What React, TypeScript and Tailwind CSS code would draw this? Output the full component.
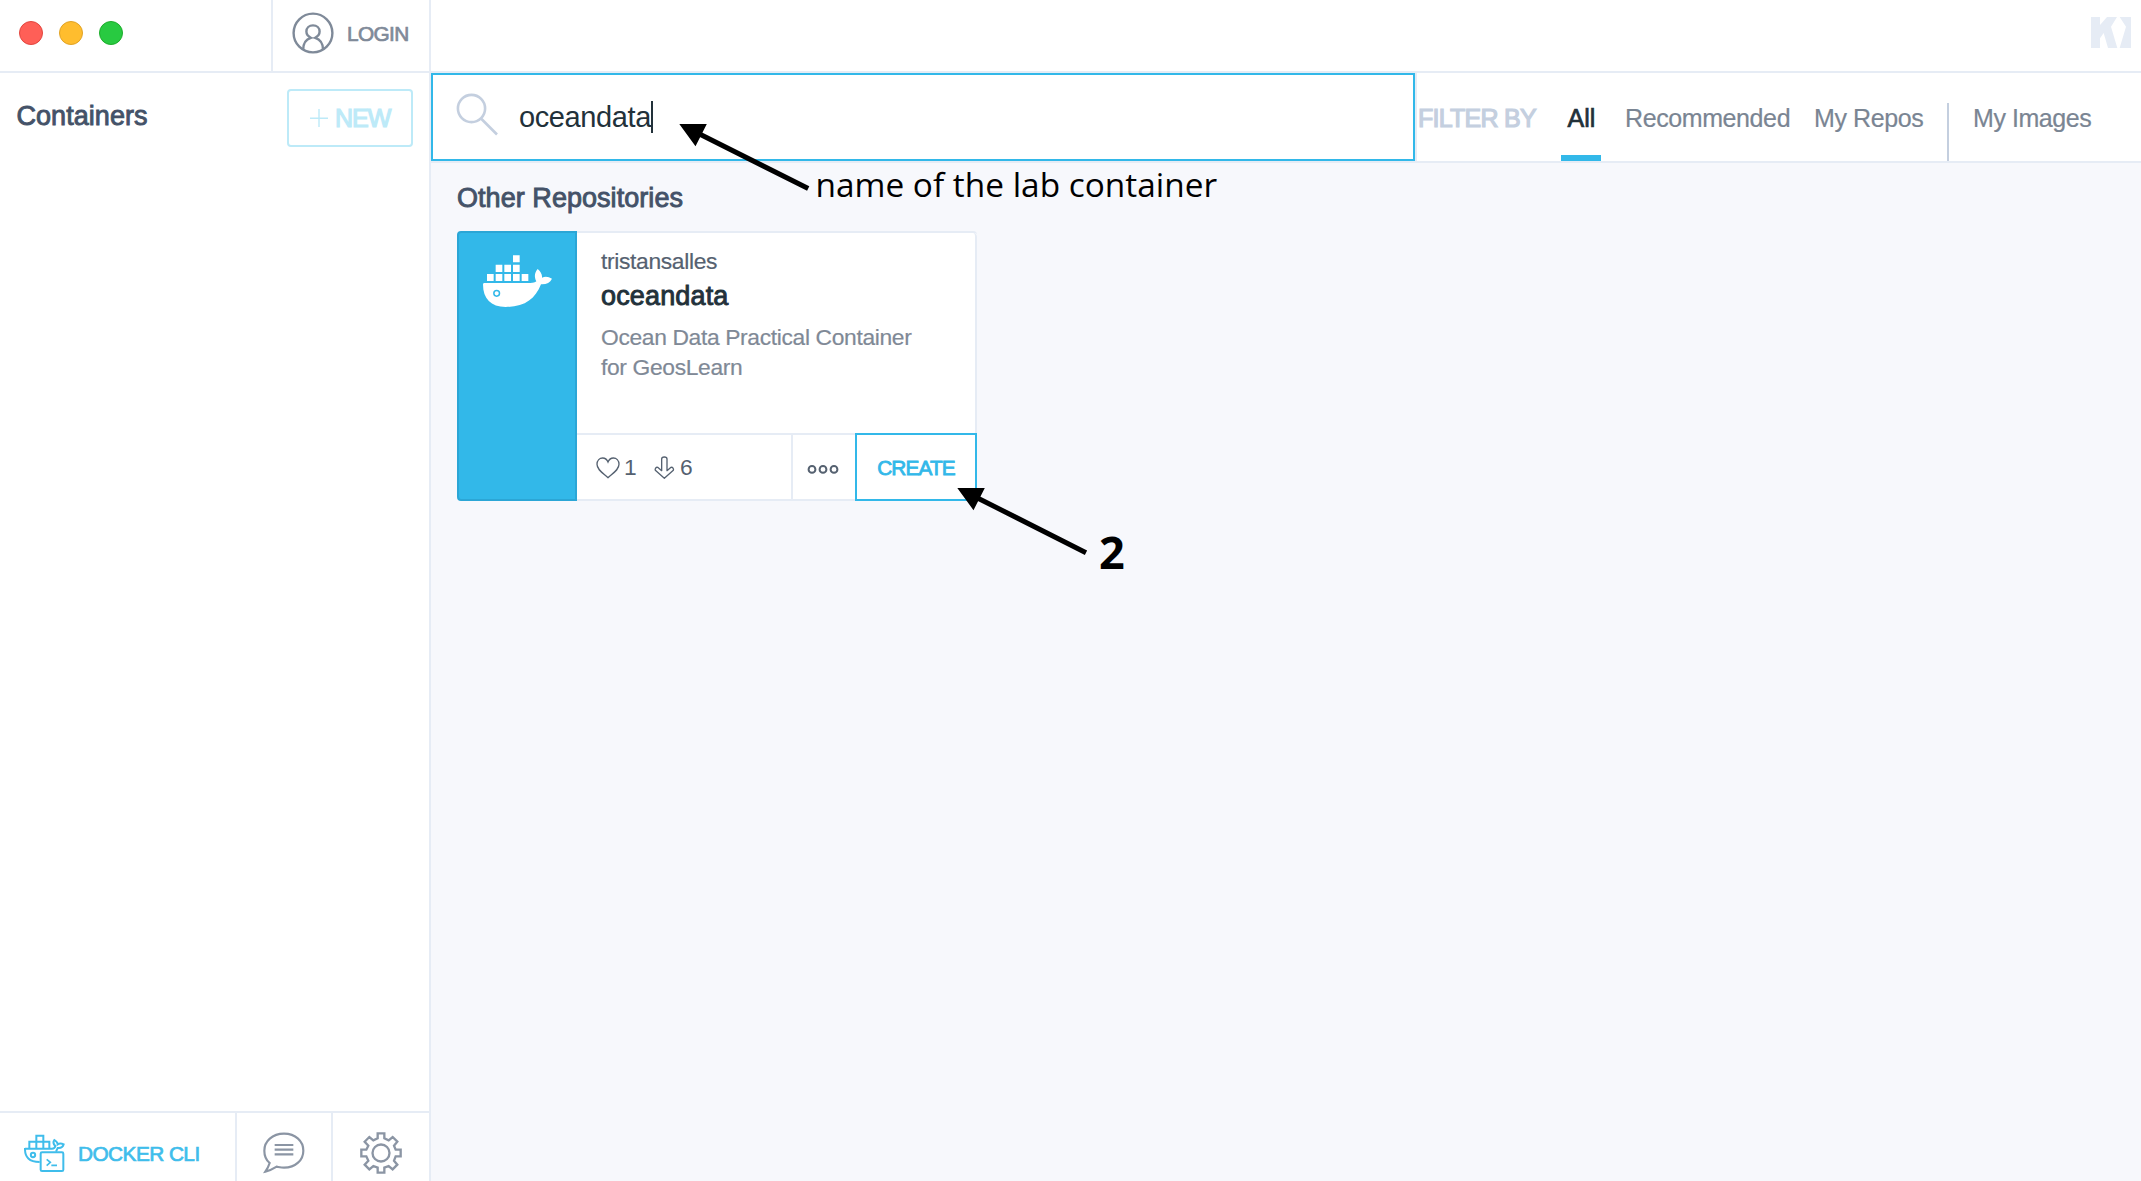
import React from "react";

const LINE = "border-[#e6ecf5]";

function UserIcon() {
  return (
    <svg width="42" height="42" viewBox="0 0 42 42" fill="none" stroke="#7f8a99" strokeWidth="2.4">
      <circle cx="21" cy="21" r="19.4" />
      <path d="M11.2 37.5 C11.2 31.5 13 27.6 18.8 25.8 C15.6 24.2 14.4 22 14.4 19.6 C14.4 16 17.2 13.4 21 13.4 C24.8 13.4 27.6 16 27.6 19.6 C27.6 22 26.4 24.2 23.2 25.8 C29 27.6 31 31.5 31 37.5" />
    </svg>
  );
}

function KitematicLogo() {
  return (
    <svg width="40" height="31" viewBox="0 0 120 93" fill="#e6ecf5">
      <path d="M0 0 H27 V24 L48 0 H78 L60 29 L79 93 H51 L38 48 L27 64 V93 H0 Z" />
      <path d="M86 0 H120 V93 H86 L105 29 Z" />
    </svg>
  );
}

function Whale() {
  return (
    <svg width="69" height="52" viewBox="0 0 207 156" fill="#fff">
      <path d="M90 1h20v21H90zM38 29h20v22H38zM64 29h20v22H64zM90 29h20v22H90zM12 57h20v21H12zM38 57h20v21H38zM64 57h20v21H64zM90 57h20v21H90zM116 57h20v21H116z" />
      <path d="M2 84 H142 C151 84 156 82 160 79 C152 64 156 51 164 42 C173 50 178 58 177 68 C187 63 197 65 207 71 C201 83 190 89 174 88 C157 132 125 156 68 156 C24 156 0 132 0 88 Z" />
      <circle cx="41" cy="115" r="8.5" fill="#fff" stroke="#32b8e9" strokeWidth="4.5" />
    </svg>
  );
}

function CliIcon() {
  return (
    <svg width="41" height="39" viewBox="0 0 123 117" fill="none" stroke="#3fbdeb" strokeWidth="6">
      <path d="M16 43 V23 H37 V5 H58 V23 H76 V43 M37 23 V43 M58 23 V43 M37 23 H58" />
      <path d="M3 44 H84 C91 44 93 41 94 36 C87 29 88 22 91 18 C97 22 101 26 101 31 C107 27 113 28 119 31 C117 39 110 43 101 42 L96 53" />
      <path d="M3 42 C2 70 16 84 47 84" />
      <circle cx="27" cy="63" r="6.5" />
      <rect x="50" y="55" width="68" height="56" rx="4" />
      <path d="M68 76 L79 85 L68 95 M82 94 H99" strokeWidth="5" />
    </svg>
  );
}

function ChatIcon() {
  return (
    <svg width="42" height="42" viewBox="0 0 126 126" fill="none" stroke="#8b95a4" strokeWidth="6.5">
      <path d="M63 5 C98 5 121 28 121 56 C121 84 98 107 63 107 C55 107 47 105 41 104 C30 111 20 116 7 119 C13 110 17 103 20 93 C9 84 4 72 4 56 C4 28 28 5 63 5 Z" />
      <path d="M35 39 H91 M35 53 H91 M35 67 H91" />
    </svg>
  );
}

function GearIcon() {
  return (
    <svg width="42" height="42" viewBox="0 0 126 126" fill="none" stroke="#8b95a4" strokeWidth="7">
      <path d="M53 4 H73 V19 L86 25 L98 15 L112 29 L102 41 L107 53 H122 V73 H107 L102 86 L112 98 L98 112 L86 102 L73 107 V122 H53 V107 L40 102 L28 112 L14 98 L25 86 L19 73 H4 V53 H19 L25 41 L14 29 L28 15 L40 25 L53 19 Z" />
      <circle cx="63" cy="63" r="25.5" />
    </svg>
  );
}

function TitleBar() {
  return (
    <header className={`flex h-[73px] shrink-0 border-b-2 ${LINE}`}>
      <div className={`flex w-[273px] gap-4 border-r-2 pt-[21px] pl-[19px] ${LINE}`}>
        <span className="size-6 rounded-full border-[1.5px] border-[#e2463f] bg-[#ff5f57]" />
        <span className="size-6 rounded-full border-[1.5px] border-[#e1a325] bg-[#ffbd2e]" />
        <span className="size-6 rounded-full border-[1.5px] border-[#1dad2b] bg-[#28ca41]" />
      </div>
      <div className={`flex w-[158px] border-r-2 pt-3 pl-[19px] ${LINE}`}>
        <UserIcon />
        <span className="ml-[13px] pt-[7px] text-[20.8px] leading-[30px] tracking-[-0.6px] text-[#7f8a99] [-webkit-text-stroke:0.7px_#7f8a99]">LOGIN</span>
      </div>
      <div className="flex flex-1 justify-end pt-[17px] pr-[10px]">
        <KitematicLogo />
      </div>
    </header>
  );
}

function Sidebar() {
  return (
    <aside className={`flex w-[431px] shrink-0 flex-col border-r-2 bg-white ${LINE}`}>
      <div className="flex flex-1 items-start justify-between pt-4 pr-4 pl-[16.5px]">
        <h2 className="pt-[12px] text-[27px] leading-[30px] tracking-[0.05px] text-[#445268] [-webkit-text-stroke:0.9px_#445268]">Containers</h2>
        <button className="flex h-[58px] w-[126px] rounded-[4px] border-2 border-[#bdeaf8] pt-[12px] pl-[21px] text-[#bdeaf8]">
          <svg className="mt-[6px]" width="18" height="18" viewBox="0 0 18 18" stroke="#bdeaf8" strokeWidth="1.4">
            <path d="M0 9.2H18M9 0V18" />
          </svg>
          <span className="ml-[7px] text-[25px] leading-[30px] tracking-[-1px] [-webkit-text-stroke:1.2px_#bdeaf8]">NEW</span>
        </button>
      </div>
      <footer className={`flex h-[70px] border-t-2 ${LINE}`}>
        <div className={`flex w-[237px] border-r-2 pt-[21px] pl-[23.5px] ${LINE}`}>
          <CliIcon />
          <span className="ml-[13.5px] pt-[5px] text-[20.8px] leading-[30px] tracking-[-0.55px] whitespace-nowrap text-[#3fbdeb] [-webkit-text-stroke:0.7px_#3fbdeb]">DOCKER CLI</span>
        </div>
        <div className={`flex w-[96px] border-r-2 pt-[19px] pl-[26px] ${LINE}`}>
          <ChatIcon />
        </div>
        <div className="flex pt-[19px] pl-[27px]">
          <GearIcon />
        </div>
      </footer>
    </aside>
  );
}

function SearchBar() {
  return (
    <div className={`flex h-[90px] shrink-0 border-b-2 bg-white ${LINE}`}>
      <div className="flex h-[88px] w-[984px] shrink-0 border-2 border-[#32b8e9] pt-[18px] pl-[23px]">
        <svg width="43" height="43" viewBox="0 0 43 43" fill="none" stroke="#c4cfdf" strokeWidth="2.6">
          <circle cx="15.5" cy="15.5" r="13.6" />
          <path d="M25 25.5L41 41.5" />
        </svg>
        <span className="ml-[20px] pt-[9px] text-[29px] leading-[30px] tracking-[-0.4px] text-[#22313a]">oceandata</span>
        <span className="mt-2 h-[32px] w-[2px] bg-[#22313a]" />
      </div>
      <nav className={`flex flex-1 border-l-2 pt-[30px] text-[25px] leading-[30px] text-[#7a8593] [-webkit-text-stroke:0.2px_#7a8593] ${LINE}`}>
        <span className="w-[144px] pl-px tracking-[-0.75px] text-[#c4cfdf] [-webkit-text-stroke:1.2px_#c4cfdf]">FILTER BY</span>
        <span className="flex h-[58px] w-[40px] flex-col items-center justify-between text-[#22313a] [-webkit-text-stroke:0.7px_#22313a]">
          <span className="pl-px">All</span>
          <span className="h-[6px] w-[40px] bg-[#32b8e9]" />
        </span>
        <span className="ml-[24px] w-[189px] tracking-[-0.4px]">Recommended</span>
        <span className="w-[133px] tracking-[-0.4px]">My Repos</span>
        <span className="h-[58px] w-[2px] bg-[#c4cfdf]" />
        <span className="ml-[24px] tracking-[-0.45px]">My Images</span>
      </nav>
    </div>
  );
}

function RepoCard() {
  return (
    <article className="mt-[18px] flex h-[270px] w-[520px]">
      <div className="flex w-[120px] shrink-0 justify-center rounded-l-[4px] border-2 border-[#2ba6d6] bg-[#32b8e9] pt-[22px] pr-[6px] pl-[7px]">
        <Whale />
      </div>
      <div className={`flex flex-1 flex-col rounded-tr-[4px] border-y-2 bg-white ${LINE}`}>
        <div className={`flex-1 rounded-tr-[4px] border-r-2 pt-[13px] pl-6 ${LINE}`}>
          <p className="text-[22.8px] leading-[30px] tracking-[-0.33px] text-[#556170] [-webkit-text-stroke:0.2px_#556170]">tristansalles</p>
          <p className="mt-[5px] text-[27px] leading-[30px] tracking-[0.15px] text-[#22313a] [-webkit-text-stroke:0.9px_#22313a]">oceandata</p>
          <p className="mt-[11px] w-[330px] text-[22.8px] leading-[30px] tracking-[-0.34px] text-[#7f8996] [-webkit-text-stroke:0.2px_#7f8996]">
            Ocean Data Practical Container for GeosLearn
          </p>
        </div>
        <div className={`-mb-[2px] flex h-[68px] border-t-2 text-[22.8px] leading-[30px] text-[#556170] ${LINE}`}>
          <div className={`mb-[2px] flex w-[216px] border-r-2 pt-[17px] pl-[19px] ${LINE}`}>
            <svg className="mt-[5px]" width="24" height="22" viewBox="0 0 72 66" fill="none" stroke="#556170" strokeWidth="4">
              <path d="M36 62 C20 48 3 38 3 22 C3 10 11 3 20 3 C28 3 33 8 36 15 C39 8 44 3 52 3 C61 3 69 10 69 22 C69 38 52 48 36 62 Z" />
            </svg>
            <span className="w-[17px] pl-1">1</span>
            <svg className="mt-1 ml-[17px]" width="21" height="24" viewBox="0 0 63 72" fill="none" stroke="#556170" strokeWidth="4">
              <path d="M23 9 C23 1 39 1 39 9 V44 L51 34 C56 33 60 38 58 43 L31 67 L4 43 C2 38 6 33 11 34 L23 44 Z" strokeLinejoin="round" />
            </svg>
            <span className="ml-[5px]">6</span>
          </div>
          <div className="flex w-[62px] justify-center pt-[29px] pr-[2px]">
            <svg width="32" height="10" viewBox="0 0 32 10" fill="none" stroke="#556170" strokeWidth="2">
              <circle cx="5" cy="5.4" r="3.4" />
              <circle cx="16" cy="5.4" r="3.4" />
              <circle cx="27" cy="5.4" r="3.4" />
            </svg>
          </div>
          <button className="-mt-[2px] h-[68px] w-[122px] border-2 border-[#32b8e9] pt-[2px] text-[20.8px] tracking-[-0.85px] text-[#32b8e9] [-webkit-text-stroke:0.8px_#32b8e9]">
            CREATE
          </button>
        </div>
      </div>
    </article>
  );
}

function Annotations() {
  return (
    <div className="pointer-events-none absolute inset-0 font-['Open_Sans','Noto_Sans',sans-serif] text-black">
      <svg className="absolute inset-0" width="2141" height="1181" viewBox="0 0 2141 1181">
        <path d="M679.3 124H706.8L695.5 146.2ZM957.3 488H984.8L973.5 510.2Z" />
        <path d="M698 133.2L808.2 188.6M976 497.2L1086 552.7" stroke="#000" strokeWidth="5" />
      </svg>
      <span className="absolute top-[160px] left-[815.5px] text-[33.4px] leading-[48px] whitespace-nowrap">name of the lab container</span>
      <span className="absolute top-[521px] left-[1099px] text-[45px] leading-[62px] font-bold">2</span>
    </div>
  );
}

export default function App() {
  return (
    <div className="relative flex h-screen w-screen flex-col overflow-hidden bg-white font-['Liberation_Sans',Arial,sans-serif]">
      <TitleBar />
      <div className="flex min-h-0 flex-1">
        <Sidebar />
        <main className="flex min-w-0 flex-1 flex-col bg-[#f7f8fc]">
          <SearchBar />
          <section className="pt-5 pl-[26px]">
            <h3 className="text-[27px] leading-[30px] tracking-[0.05px] text-[#445268] [-webkit-text-stroke:0.9px_#445268]">Other Repositories</h3>
            <RepoCard />
          </section>
        </main>
      </div>
      <Annotations />
    </div>
  );
}
